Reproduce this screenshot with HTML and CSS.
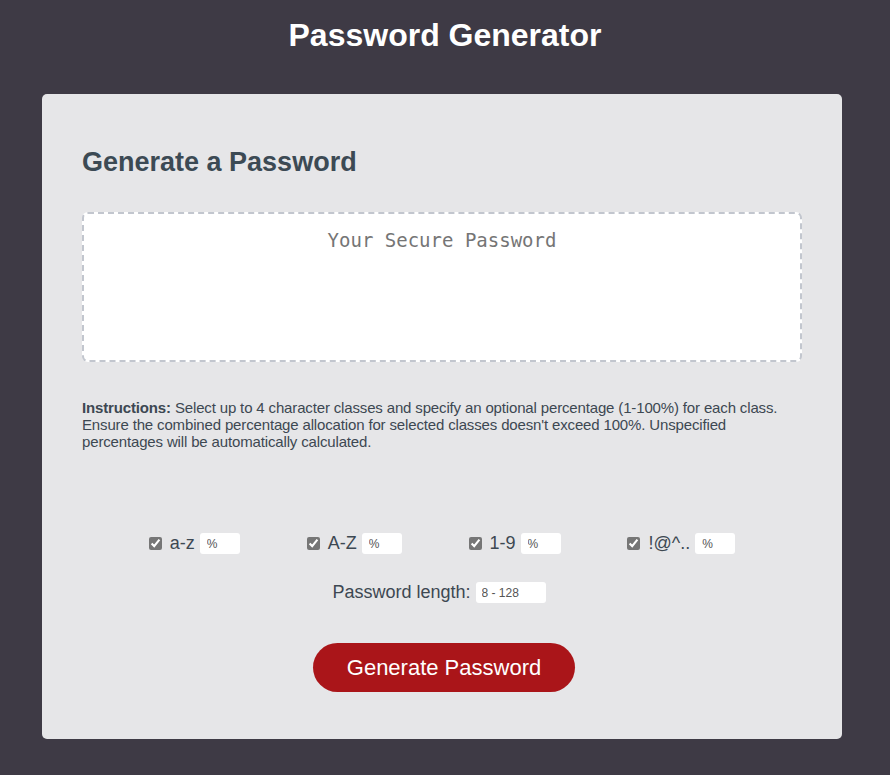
FILE: index.html
```html
<!DOCTYPE html>
<html>
<head>
<meta charset="utf-8">
<title>Password Generator</title>
<link rel="stylesheet" href="styles.css">
</head>
<body>
<header class="page-header">
  <h1 class="page-title">Password Generator</h1>
</header>
<main class="card">
  <h2 class="card-title">Generate a Password</h2>
  <textarea class="password-box" readonly placeholder="Your Secure Password"></textarea>
  <p class="instructions"><strong>Instructions:</strong> Select up to 4 character classes and specify an optional percentage (1-100%) for each class. Ensure the combined percentage allocation for selected classes doesn't exceed 100%. Unspecified percentages will be automatically calculated.</p>
  <div class="classes">
    <label class="class-item"><input type="checkbox" class="check" checked><span class="class-label">a-z</span><input type="text" class="pct" placeholder="%"></label>
    <label class="class-item"><input type="checkbox" class="check" checked><span class="class-label">A-Z</span><input type="text" class="pct" placeholder="%"></label>
    <label class="class-item"><input type="checkbox" class="check" checked><span class="class-label">1-9</span><input type="text" class="pct" placeholder="%"></label>
    <label class="class-item"><input type="checkbox" class="check" checked><span class="class-label">!@^..</span><input type="text" class="pct" placeholder="%"></label>
  </div>
  <div class="length-row">
    <label class="length-label">Password length:</label>
    <input type="text" class="length-input" placeholder="8 - 128">
  </div>
  <div class="btn-row">
    <button class="generate-btn">Generate Password</button>
  </div>
</main>
</body>
</html>
```

FILE: styles.css
```css
html, body {
  margin: 0;
  padding: 0;
}
body {
  background: #3e3a45;
  font-family: "Liberation Sans", Arial, sans-serif;
  color: #3d4852;
  height: 775px;
}
.page-header {
  height: 94px;
  display: flex;
  justify-content: center;
}
.page-title {
  margin: 16px 0 0;
  font-size: 32px;
  line-height: 38px;
  font-weight: bold;
  color: #ffffff;
}
.card {
  margin: 0 48px 0 42px;
  background: #e6e6e8;
  border-radius: 5px;
  padding: 48px 40px 47px;
  display: flex;
  flex-direction: column;
}
.card-title {
  margin: 0 0 30px;
  font-size: 27px;
  line-height: 40px;
  font-weight: bold;
  color: #3c4a54;
}
.password-box {
  box-sizing: border-box;
  height: 150px;
  width: 100%;
  border: 2px dashed #c2c6ce;
  border-radius: 6px;
  background: #ffffff;
  resize: none;
  text-align: center;
  font-family: "DejaVu Sans Mono", "Liberation Mono", monospace;
  font-size: 19px;
  line-height: 24px;
  padding: 14px 10px;
  outline: none;
}
.password-box::placeholder {
  color: #757575;
}
.instructions {
  margin: 37px 0 0;
  font-size: 15px;
  line-height: 17px;
  color: #3d4852;
  letter-spacing: -0.15px;
}
.instructions strong {
  font-weight: bold;
}
.classes {
  margin-top: 83px;
  display: flex;
  justify-content: space-evenly;
  align-items: center;
}
.class-item {
  display: flex;
  align-items: center;
  font-size: 18px;
  color: #3d4852;
}
.check {
  width: 13px;
  height: 13px;
  margin: 0 8px 0 0;
  accent-color: #767676;
}
.class-label {
  margin-right: 5px;
}
.pct {
  box-sizing: border-box;
  width: 40px;
  height: 21px;
  border: none;
  border-radius: 3px;
  background: #ffffff;
  font-size: 12px;
  padding: 0 7px;
  font-family: "Liberation Sans", Arial, sans-serif;
}
.pct::placeholder, .length-input::placeholder {
  color: #555;
}
.length-row {
  margin-top: 28px;
  padding-right: 6px;
  display: flex;
  justify-content: center;
  align-items: center;
  gap: 5px;
}
.length-label {
  font-size: 18px;
  color: #3d4852;
}
.length-input {
  box-sizing: border-box;
  width: 70px;
  height: 21px;
  border: none;
  border-radius: 3px;
  background: #ffffff;
  font-size: 12px;
  padding: 0 6px;
  font-family: "Liberation Sans", Arial, sans-serif;
}
.btn-row {
  margin-top: 40px;
  padding-left: 4px;
  display: flex;
  justify-content: center;
}
.generate-btn {
  width: 262px;
  height: 49px;
  border: none;
  border-radius: 25px;
  background: #aa1519;
  color: #ffffff;
  font-family: "Liberation Sans", Arial, sans-serif;
  font-size: 22px;
}
```
